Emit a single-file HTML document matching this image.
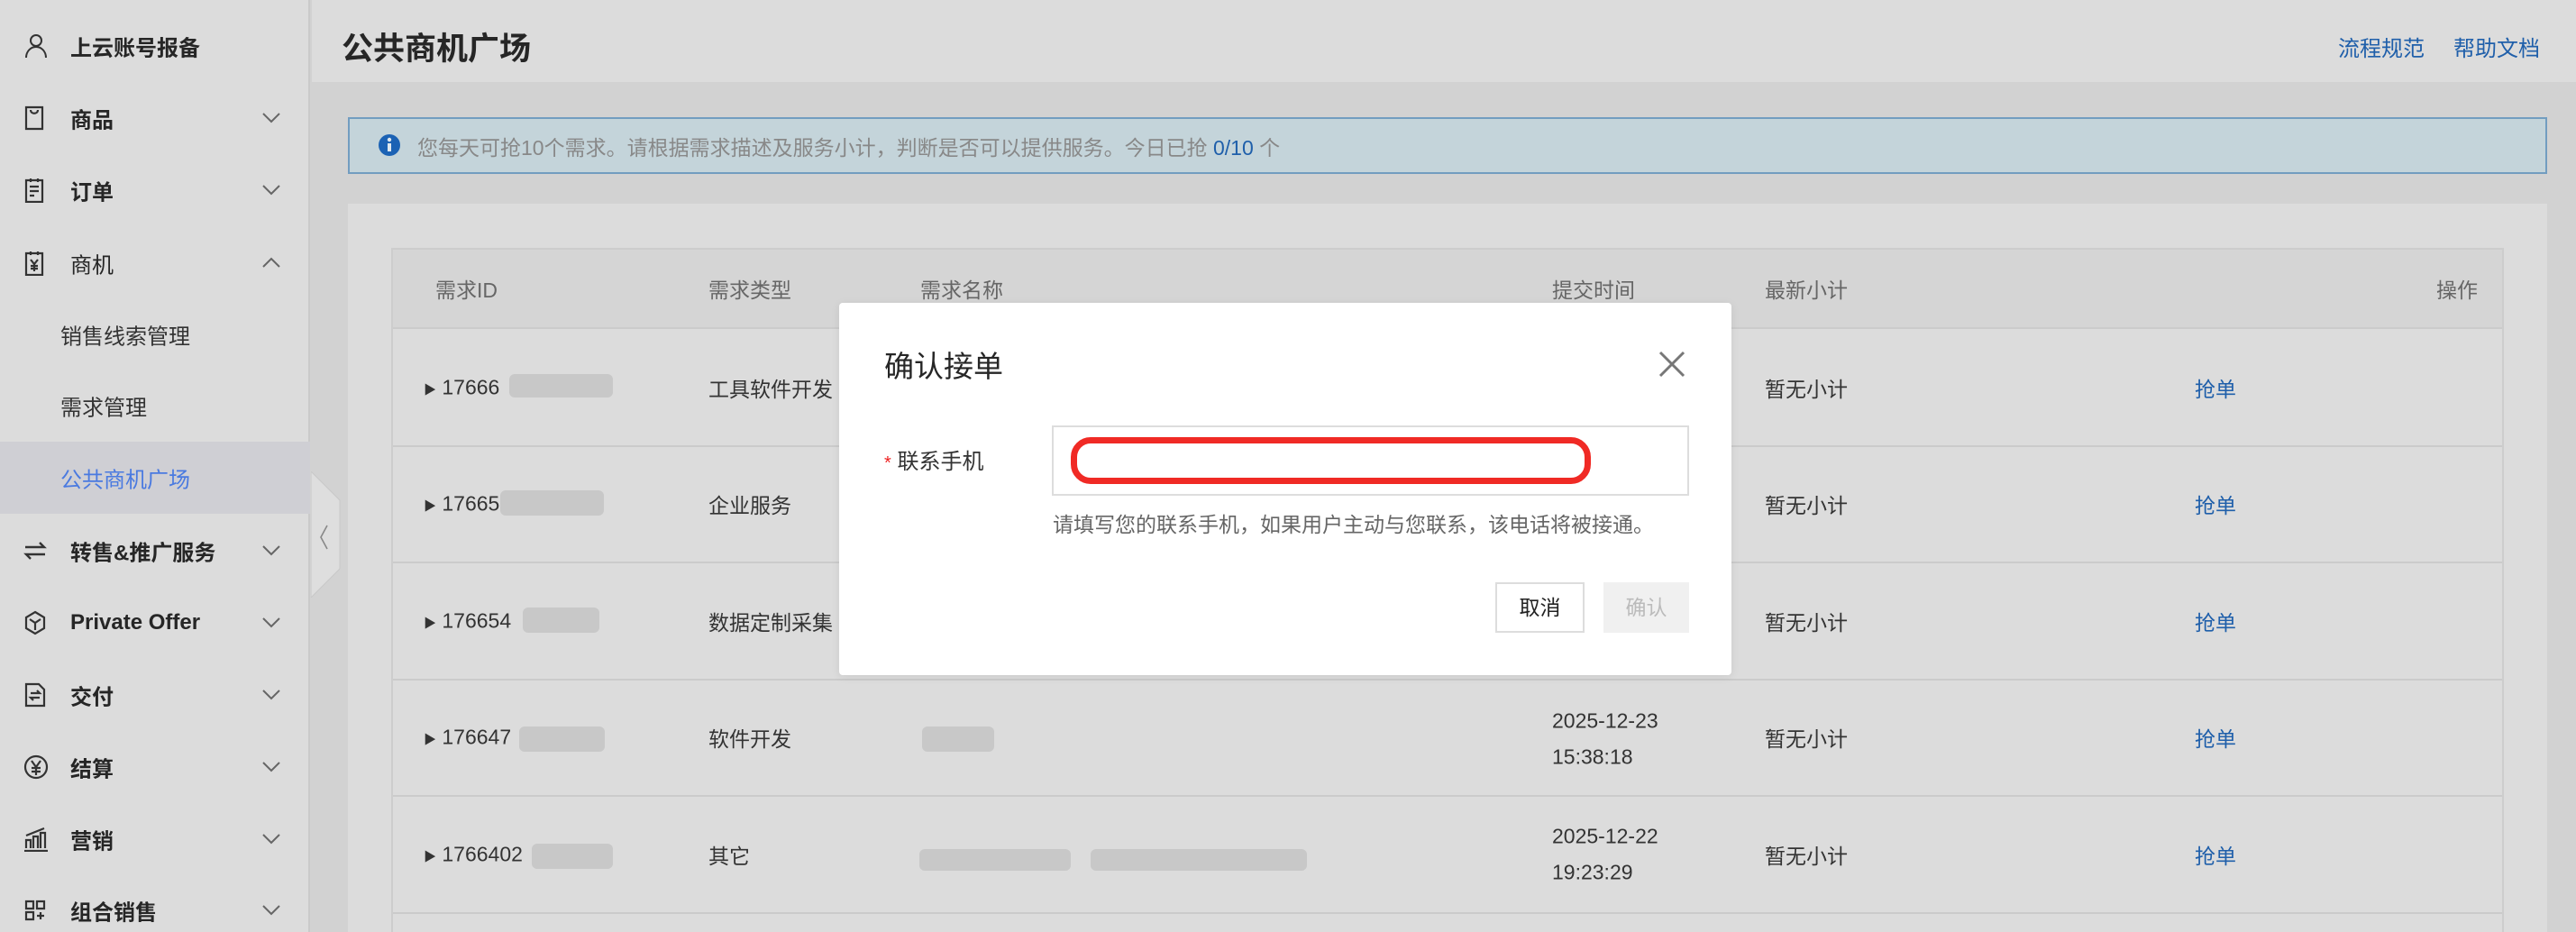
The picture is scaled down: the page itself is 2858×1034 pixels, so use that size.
<!DOCTYPE html>
<html><head><meta charset="utf-8"><style>
*{margin:0;padding:0;box-sizing:border-box}
body{width:2858px;height:1034px;overflow:hidden;background:#d2d2d2;font-family:"Liberation Sans","Noto Sans CJK SC",sans-serif;position:relative;color:#333}
.a{position:absolute;white-space:nowrap}
#side{position:absolute;left:0;top:0;width:344px;height:1034px;background:#dcdcdc;border-right:2px solid #cacaca}
.mi{position:absolute;left:78px;font-size:24px;font-weight:bold;color:#262626;transform:translateY(-50%)}
.sub{position:absolute;left:67px;font-size:24px;color:#333;transform:translateY(-50%)}
.ic{position:absolute;left:26px;transform:translateY(-50%)}
.chev{position:absolute;left:290px;transform:translateY(-50%)}
.th{position:absolute;top:320px;font-size:23px;color:#666;transform:translateY(-50%)}
.td{position:absolute;font-size:23px;color:#333;transform:translateY(-50%)}
.blur{position:absolute;background:#c8c8c8;border-radius:6px}
.link{color:#1f5faa}
</style></head><body>
<div id="side">
 <svg class="ic" style="top:51px" width="28" height="28" viewBox="0 0 28 28" fill="none" stroke="#333" stroke-width="2"><circle cx="14" cy="8" r="6"/><path d="M3 27c0-7 5-12 11-12s11 5 11 12"/></svg>
 <div class="mi" style="top:51px">上云账号报备</div>
 <svg class="ic" style="top:131px" width="24" height="28" viewBox="0 0 24 28" fill="none" stroke="#333" stroke-width="2.2"><path d="M3 2h18v24H3z"/><path d="M8 5c0 5 8 5 8 0"/></svg>
 <div class="mi" style="top:131px">商品</div>
 <svg class="ic" style="top:211px" width="24" height="28" viewBox="0 0 24 28" fill="none" stroke="#333" stroke-width="2.2"><path d="M3 3h18v24H3z"/><path d="M8 1v4M16 1v4M7 10h10M7 15h10M7 20h5"/></svg>
 <div class="mi" style="top:211px">订单</div>
 <svg class="ic" style="top:292px" width="24" height="28" viewBox="0 0 24 28" fill="none" stroke="#333" stroke-width="2.2"><path d="M3 3h18v24H3z"/><path d="M8 1v4M16 1v4M8 10l4 5 4-5M12 15v8M8 17h8M8 20h8"/></svg>
 <div class="mi" style="top:292px;font-weight:normal">商机</div>
 <div class="sub" style="top:371px">销售线索管理</div>
 <div class="sub" style="top:450px">需求管理</div>
 <div style="position:absolute;left:0;top:490px;width:344px;height:80px;background:#cfcfd4"></div>
 <div class="sub" style="top:530px;color:#4a7ae0">公共商机广场</div>
 <svg class="ic" style="top:611px" width="26" height="24" viewBox="0 0 26 24" fill="none" stroke="#333" stroke-width="2.4"><path d="M2 8h21l-5-5M24 16H3l5 5"/></svg>
 <div class="mi" style="top:611px">转售&amp;推广服务</div>
 <svg class="ic" style="top:691px" width="26" height="28" viewBox="0 0 26 28" fill="none" stroke="#333" stroke-width="2.2"><path d="M13 2l10 6v12l-10 6-10-6V8z"/><path d="M7 10l6 4 6-4M13 14v8"/></svg>
 <div class="mi" style="top:691px">Private Offer</div>
 <svg class="ic" style="top:771px" width="26" height="28" viewBox="0 0 26 28" fill="none" stroke="#333" stroke-width="2.2"><path d="M3 2h14l6 6v18H3z"/><path d="M8 12h10l-3-3M18 17H8l3 3"/></svg>
 <div class="mi" style="top:771px">交付</div>
 <svg class="ic" style="top:851px" width="28" height="28" viewBox="0 0 28 28" fill="none" stroke="#333" stroke-width="2.2"><circle cx="14" cy="14" r="12"/><path d="M9 7l5 7 5-7M14 14v9M9 15h10M9 19h10"/></svg>
 <div class="mi" style="top:851px">结算</div>
 <svg class="ic" style="top:931px" width="28" height="28" viewBox="0 0 28 28" fill="none" stroke="#333" stroke-width="2.2"><path d="M1 27h26M3 24v-9h5v9M11 24V11h5v13M19 24V7h5v17M3 10l20-8"/></svg>
 <div class="mi" style="top:931px">营销</div>
 <svg class="ic" style="top:1010px" width="26" height="26" viewBox="0 0 26 26" fill="none" stroke="#333" stroke-width="2.2"><path d="M3 3h8v8H3zM15 3h8v8h-8zM3 15h8v8H3zM19 15v8M15 19h8"/></svg>
 <div class="mi" style="top:1010px">组合销售</div>
 <svg class="chev" style="top:131px" width="22" height="14" viewBox="0 0 22 14" fill="none" stroke="#666" stroke-width="2"><path d="M2 2l9 9 9-9"/></svg>
 <svg class="chev" style="top:211px" width="22" height="14" viewBox="0 0 22 14" fill="none" stroke="#666" stroke-width="2"><path d="M2 2l9 9 9-9"/></svg>
 <svg class="chev" style="top:291px" width="22" height="14" viewBox="0 0 22 14" fill="none" stroke="#666" stroke-width="2"><path d="M2 12l9-9 9 9"/></svg>
 <svg class="chev" style="top:611px" width="22" height="14" viewBox="0 0 22 14" fill="none" stroke="#666" stroke-width="2"><path d="M2 2l9 9 9-9"/></svg>
 <svg class="chev" style="top:691px" width="22" height="14" viewBox="0 0 22 14" fill="none" stroke="#666" stroke-width="2"><path d="M2 2l9 9 9-9"/></svg>
 <svg class="chev" style="top:771px" width="22" height="14" viewBox="0 0 22 14" fill="none" stroke="#666" stroke-width="2"><path d="M2 2l9 9 9-9"/></svg>
 <svg class="chev" style="top:851px" width="22" height="14" viewBox="0 0 22 14" fill="none" stroke="#666" stroke-width="2"><path d="M2 2l9 9 9-9"/></svg>
 <svg class="chev" style="top:931px" width="22" height="14" viewBox="0 0 22 14" fill="none" stroke="#666" stroke-width="2"><path d="M2 2l9 9 9-9"/></svg>
 <svg class="chev" style="top:1010px" width="22" height="14" viewBox="0 0 22 14" fill="none" stroke="#666" stroke-width="2"><path d="M2 2l9 9 9-9"/></svg>
</div>
<svg class="a" style="left:345px;top:523px" width="34" height="140" viewBox="0 0 34 140"><path d="M0 0L32 32V108L0 140Z" fill="#dedede" stroke="#c8c8c8" stroke-width="1"/><path d="M18 60l-7 13 7 13" fill="none" stroke="#888" stroke-width="1.6"/></svg>
<!-- header -->
<div class="a" style="left:346px;top:0;width:2512px;height:91px;background:#dcdcdc"></div>
<div class="a" style="left:379px;top:26px;font-size:35px;font-weight:bold;color:#262626">公共商机广场</div>
<div class="a link" style="left:2594px;top:34px;font-size:24px">流程规范</div>
<div class="a link" style="left:2722px;top:34px;font-size:24px">帮助文档</div>
<!-- banner -->
<div class="a" style="left:386px;top:130px;width:2440px;height:63px;background:#c4d4da;border:2px solid #729dc0"></div>
<svg class="a" style="left:419px;top:147px" width="26" height="28" viewBox="0 0 26 28"><circle cx="13" cy="14" r="12" fill="#1b62b4"/><rect x="11" y="12" width="4" height="9" fill="#dfe8ee"/><circle cx="13" cy="8" r="2.2" fill="#dfe8ee"/></svg>
<div class="a" style="left:463px;top:145px;font-size:23px;color:#888">您每天可抢10个需求。请根据需求描述及服务小计，判断是否可以提供服务。今日已抢 <span class="link">0/10</span> 个</div>
<!-- card -->
<div class="a" style="left:386px;top:226px;width:2440px;height:808px;background:#dcdcdc"></div>
<div class="a" style="left:434px;top:275px;width:2344px;height:759px;border:2px solid #cdcdcd;border-bottom:none"></div>
<div class="a" style="left:436px;top:277px;width:2340px;height:88px;background:#d5d5d5;border-bottom:2px solid #cbcbcb"></div>
<div class="th" style="left:483px">需求ID</div>
<div class="th" style="left:786px">需求类型</div>
<div class="th" style="left:1021px">需求名称</div>
<div class="th" style="left:1722px">提交时间</div>
<div class="th" style="left:1958px">最新小计</div>
<div class="th" style="left:2703px">操作</div>
<div class="a" style="left:436px;top:494px;width:2340px;height:2px;background:#cbcbcb"></div>
<div class="a" style="left:436px;top:623px;width:2340px;height:2px;background:#cbcbcb"></div>
<div class="a" style="left:436px;top:753px;width:2340px;height:2px;background:#cbcbcb"></div>
<div class="a" style="left:436px;top:882px;width:2340px;height:2px;background:#cbcbcb"></div>
<div class="a" style="left:436px;top:1012px;width:2340px;height:2px;background:#cbcbcb"></div>
<!-- rows -->
<div class="td" style="left:470px;top:430px"><span style="font-size:14px">▶</span> 17666</div>
<div class="blur" style="left:565px;top:415px;width:115px;height:26px"></div>
<div class="td" style="left:786px;top:430px">工具软件开发</div>
<div class="td" style="left:1958px;top:430px">暂无小计</div>
<div class="td link" style="left:2435px;top:430px">抢单</div>
<div class="td" style="left:470px;top:559px"><span style="font-size:14px">▶</span> 17665</div>
<div class="blur" style="left:555px;top:544px;width:115px;height:28px"></div>
<div class="td" style="left:786px;top:559px">企业服务</div>
<div class="td" style="left:1958px;top:559px">暂无小计</div>
<div class="td link" style="left:2435px;top:559px">抢单</div>
<div class="td" style="left:470px;top:689px"><span style="font-size:14px">▶</span> 176654</div>
<div class="blur" style="left:580px;top:674px;width:85px;height:28px"></div>
<div class="td" style="left:786px;top:689px">数据定制采集</div>
<div class="td" style="left:1958px;top:689px">暂无小计</div>
<div class="td link" style="left:2435px;top:689px">抢单</div>
<div class="td" style="left:470px;top:818px"><span style="font-size:14px">▶</span> 176647</div>
<div class="blur" style="left:576px;top:806px;width:95px;height:28px"></div>
<div class="td" style="left:786px;top:818px">软件开发</div>
<div class="blur" style="left:1023px;top:806px;width:80px;height:28px"></div>
<div class="td" style="left:1722px;top:800px">2025-12-23</div>
<div class="td" style="left:1722px;top:840px">15:38:18</div>
<div class="td" style="left:1958px;top:818px">暂无小计</div>
<div class="td link" style="left:2435px;top:818px">抢单</div>
<div class="td" style="left:470px;top:948px"><span style="font-size:14px">▶</span> 1766402</div>
<div class="blur" style="left:590px;top:936px;width:90px;height:28px"></div>
<div class="td" style="left:786px;top:948px">其它</div>
<div class="blur" style="left:1020px;top:942px;width:168px;height:24px"></div>
<div class="blur" style="left:1210px;top:942px;width:240px;height:24px"></div>
<div class="td" style="left:1722px;top:928px">2025-12-22</div>
<div class="td" style="left:1722px;top:968px">19:23:29</div>
<div class="td" style="left:1958px;top:948px">暂无小计</div>
<div class="td link" style="left:2435px;top:948px">抢单</div>
<!-- modal -->
<div class="a" style="left:931px;top:336px;width:990px;height:413px;background:#fff;border-radius:4px;box-shadow:0 2px 10px rgba(0,0,0,.08)"></div>
<div class="a" style="left:981px;top:380px;font-size:33px;color:#262626">确认接单</div>
<svg class="a" style="left:1839px;top:388px" width="32" height="32" viewBox="0 0 32 32" stroke="#777" stroke-width="3"><path d="M3 3l26 26M29 3L3 29"/></svg>
<div class="a" style="left:981px;top:492px;font-size:24px;color:#333"><span style="color:#e22;font-size:20px">*</span> 联系手机</div>
<div class="a" style="left:1167px;top:472px;width:707px;height:78px;border:2px solid #ddd"></div>
<div class="a" style="left:1188px;top:485px;width:577px;height:52px;border:7px solid #f02a25;border-radius:22px"></div>
<div class="a" style="left:1168px;top:563px;font-size:23px;color:#666">请填写您的联系手机，如果用户主动与您联系，该电话将被接通。</div>
<div class="a" style="left:1659px;top:646px;width:99px;height:56px;border:2px solid #ddd;font-size:23px;line-height:52px;text-align:center;color:#222">取消</div>
<div class="a" style="left:1779px;top:646px;width:95px;height:56px;background:#f0f0f0;font-size:23px;line-height:56px;text-align:center;color:#bbb">确认</div>
</body></html>
